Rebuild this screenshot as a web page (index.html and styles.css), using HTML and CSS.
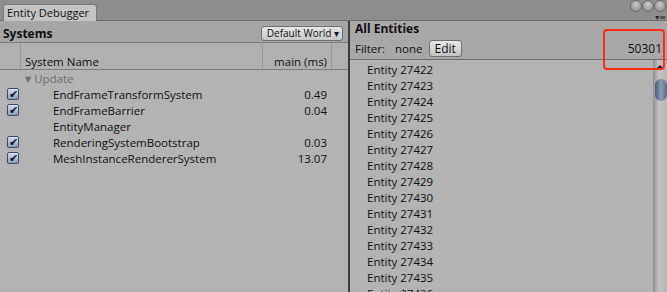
FILE: index.html
```html
<!DOCTYPE html>
<html lang="en">
<head>
  <meta charset="UTF-8" />
  <title>Entity Debugger</title>
  <link rel="stylesheet" href="styles.css">
</head>
<body>
  <div class="titlebar">
    <div class="tab">Entity Debugger</div>
    <div class="win-buttons">
      <span class="dot"></span><span class="dot"></span><span class="dot"></span>
    </div>
    <div class="menu-icon">&#9662;&#8801;</div>
  </div>

  <div class="content">
    <div class="left">
      <div class="panel-head">
        <span class="title">Systems</span>
        <span class="dropdown">Default World &#9662;</span>
      </div>
      <div class="col-head">
        <div class="col-check"></div>
        <div class="col-name">System Name</div>
        <div class="col-time">main (ms)</div>
      </div>
      <div class="rows">
        <div class="row group"><span class="arrow">&#9660;</span> Update</div>
        <div class="row"><span class="check on"></span><span class="name">EndFrameTransformSystem</span><span class="time">0.49</span></div>
        <div class="row"><span class="check on"></span><span class="name">EndFrameBarrier</span><span class="time">0.04</span></div>
        <div class="row"><span class="check"></span><span class="name">EntityManager</span><span class="time"></span></div>
        <div class="row"><span class="check on"></span><span class="name">RenderingSystemBootstrap</span><span class="time">0.03</span></div>
        <div class="row"><span class="check on"></span><span class="name">MeshInstanceRendererSystem</span><span class="time">13.07</span></div>
      </div>
    </div>

    <div class="right">
      <div class="right-head">
        <div class="title">All Entities</div>
        <div class="filter">
          <span>Filter:</span>
          <span class="none">none</span>
          <span class="edit">Edit</span>
          <span class="count">50301</span>
        </div>
      </div>
      <div class="list-wrap">
        <div class="list" id="list"></div>
        <div class="scrollbar">
          <div class="up"></div>
          <div class="thumb"></div>
        </div>
      </div>
    </div>
  </div>

  <div class="highlight"></div>

  <script>
    const list = document.getElementById("list");
    for (let i = 27422; i <= 27436; i++) {
      const d = document.createElement("div");
      d.className = "entity";
      d.textContent = "Entity " + i;
      list.appendChild(d);
    }
  </script>
</body>
</html>
```

FILE: styles.css
```css
* {
  box-sizing: border-box;
  margin: 0;
  padding: 0;
}

body {
  width: 667px;
  height: 292px;
  overflow: hidden;
  background: #b3b3b3;
  font-family: "Open Sans", "DejaVu Sans", sans-serif;
  font-size: 11.5px;
  color: #111;
  position: relative;
}

.titlebar {
  height: 21px;
  background: #8e8e8e;
  border-bottom: 1px solid #6e6e6e;
  position: relative;
}

.tab {
  position: absolute;
  left: 3px;
  top: 4px;
  width: 94px;
  height: 17px;
  background: #c4c4c4;
  border: 1px solid #7a7a7a;
  border-bottom: none;
  border-radius: 3px 3px 0 0;
  font-size: 11px;
  padding-left: 3px;
  line-height: 15px;
}

.win-buttons {
  position: absolute;
  right: 1px;
  top: 0;
  display: flex;
  gap: 0;
}

.dot {
  width: 12px;
  height: 12px;
  border-radius: 50%;
  background: radial-gradient(circle at 50% 35%, #c8c8c8, #8a8a8a);
  border: 1px solid #6a6a6a;
}

.menu-icon {
  position: absolute;
  right: 1px;
  top: 12px;
  font-size: 8px;
  color: #222;
  line-height: 10px;
}

.content {
  display: flex;
  height: 271px;
}

.left {
  width: 350px;
  border-right: 2px solid #3d3d3d;
}

.panel-head {
  height: 22px;
  background: #a6a6a6;
  border-bottom: 1px solid #7d7d7d;
  display: flex;
  align-items: center;
  justify-content: space-between;
  padding: 3px 5px 0 3px;
}

.panel-head .title,
.right-head .title {
  font-weight: bold;
  font-size: 12px;
}

.dropdown {
  font-size: 10px;
  height: 15px;
  line-height: 13px;
  padding: 0 3px 0 5px;
  border: 1px solid #6f6f6f;
  border-radius: 3px;
  background: linear-gradient(#e6e6e6, #c8c8c8);
}

.col-head {
  height: 27px;
  display: flex;
  border-bottom: 1px solid #7d7d7d;
  background: #b0b0b0;
}

.col-head > div {
  display: flex;
  align-items: flex-end;
  padding-bottom: 0;
}

.col-check {
  width: 21px;
  border-right: 1px solid #9a9a9a;
}

.col-name {
  width: 242px;
  padding-left: 4px;
  border-right: 1px solid #9a9a9a;
}

.col-time {
  width: 69px;
  justify-content: flex-end;
  padding-right: 4px;
  border-right: 1px solid #9a9a9a;
}

.rows {
  padding-top: 0;
}

.row {
  height: 16px;
  display: flex;
  align-items: center;
}

.row.group {
  padding-left: 25px;
  color: #6e6e6e;
}

.arrow {
  font-size: 8px;
  margin-right: 3px;
  color: #6e6e6e;
}

.check {
  width: 12px;
  height: 12px;
  margin-left: 7px;
}

.check.on {
  background: linear-gradient(#d8dff0, #8f9bb8);
  border: 1px solid #3f4a66;
  border-radius: 2px;
  position: relative;
}

.check.on::after {
  content: "\2714";
  position: absolute;
  left: 1px;
  top: -3px;
  font-size: 11px;
  color: #10182e;
}

.name {
  margin-left: 34px;
  width: 225px;
}

.time {
  width: 49px;
  text-align: right;
}

.right {
  flex: 1;
  display: flex;
  flex-direction: column;
}

.right-head {
  height: 39px;
  background: #a8a8a8;
  border-bottom: 1px solid #6d6d6d;
  padding: 0 5px 0 5px;
}

.right-head .title {
  line-height: 15px;
  margin-top: 0;
}

.filter {
  display: flex;
  align-items: center;
  margin-top: 4px;
}

.none {
  margin-left: 10px;
}

.edit {
  margin-left: 6px;
  height: 17px;
  line-height: 15px;
  padding: 0 5px;
  font-size: 12px;
  border: 1px solid #6f6f6f;
  border-radius: 3px;
  background: linear-gradient(#e6e6e6, #c4c4c4);
}

.count {
  margin-left: auto;
  font-size: 12px;
}

.list-wrap {
  flex: 1;
  display: flex;
  overflow: hidden;
}

.list {
  flex: 1;
  padding-left: 17px;
}

.entity {
  height: 16px;
  line-height: 19px;
}

.scrollbar {
  width: 14px;
  background: linear-gradient(90deg, #8e8e8e, #c2c2c2 40%, #b6b6b6);
  position: relative;
}

.up {
  width: 0;
  height: 0;
  margin: 5px auto 0;
  border-left: 4px solid transparent;
  border-right: 4px solid transparent;
  border-bottom: 4px solid #222;
}

.thumb {
  width: 12px;
  height: 22px;
  margin: 10px 0 0 2px;
  border-radius: 6px;
  background: linear-gradient(90deg, #4d5a75, #8c9ab6 50%, #5b6885);
}

.highlight {
  position: absolute;
  left: 603px;
  top: 29px;
  width: 62px;
  height: 41px;
  border: 2px solid #ff2a1a;
  border-radius: 4px;
}
```
